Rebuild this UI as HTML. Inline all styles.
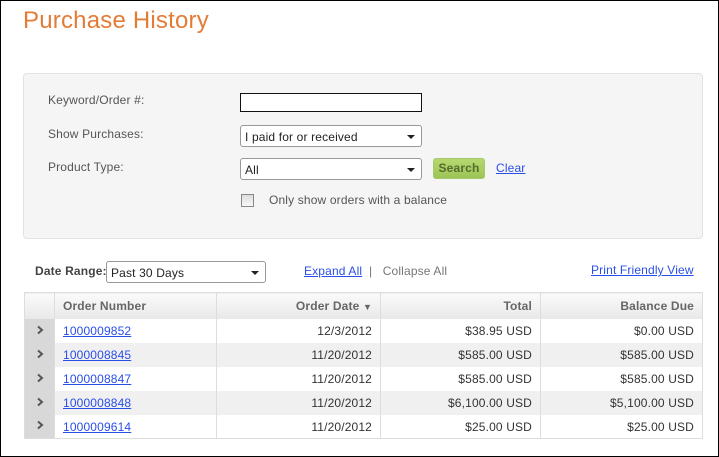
<!DOCTYPE html>
<html><head><style>
*{box-sizing:border-box;margin:0;padding:0}
body{width:719px;height:457px;overflow:hidden;background:#fff;font-family:"Liberation Sans",Arial,sans-serif;font-size:12px;letter-spacing:0.15px;color:#555;position:relative}
.frame{position:absolute;left:0;top:0;width:719px;height:457px;border:1px solid #000;pointer-events:none}
.a{position:absolute;white-space:nowrap}
h1{position:absolute;left:23px;top:7px;font-size:24px;font-weight:normal;color:#e37c36;letter-spacing:0.2px}
.panel{position:absolute;left:23px;top:73px;width:680px;height:166px;background:#f5f5f5;border:1px solid #e2e2e2;border-radius:4px}
.inp{position:absolute;background:#fff;border:1px solid #999;border-radius:3px;height:22px;font-size:12px;color:#222;padding:4px 0 0 4px}
.caret{position:absolute;right:6px;top:9px;width:0;height:0;border-left:4px solid transparent;border-right:4px solid transparent;border-top:4px solid #222}
a,.lnk{color:#2a4ee8;text-decoration:underline}
table{position:absolute;left:24px;top:292px;width:679px;border-collapse:collapse;border:1px solid #ddd}
th{height:26px;background:linear-gradient(#fafafa,#e8e8e8);font-weight:bold;color:#666;font-size:12px;border-left:1px solid #ddd;padding:1px 8px 0}
td{height:24px;border-left:1px solid #ddd;padding:1px 8px 0;color:#333;font-size:12px}
tr:nth-child(odd) td{background:#f0f0f0}
td.ex{background:#d8d8d8!important;text-align:center;padding:0}
.r{text-align:right}
</style></head><body>
<h1>Purchase History</h1>
<div class="panel"></div>
<div class="a" style="left:48px;top:93px">Keyword/Order #:</div>
<div class="inp" style="left:240px;top:93px;width:182px;height:19px;border:1px solid #111;border-radius:0"></div>
<div class="a" style="left:48px;top:127px">Show Purchases:</div>
<div class="inp" style="left:240px;top:125px;width:182px">I paid for or received<span class="caret"></span></div>
<div class="a" style="left:48px;top:160px">Product Type:</div>
<div class="inp" style="left:240px;top:158px;width:182px">All<span class="caret"></span></div>
<div class="a" style="left:433px;top:158px;width:52px;height:21px;background:linear-gradient(#b6d870,#9cc455);border:1px solid #a6c86a;border-radius:3px;color:#556b2f;font-weight:bold;font-size:12px;text-align:center;line-height:19px">Search</div>
<div class="a lnk" style="left:496px;top:161px">Clear</div>
<div class="a" style="left:241px;top:194px;width:13px;height:13px;border:1px solid #888;background:linear-gradient(#ddd,#f8f8f8)"></div>
<div class="a" style="left:269px;top:193px">Only show orders with a balance</div>
<div class="a" style="left:35px;top:264px;font-weight:bold;color:#444">Date Range:</div>
<div class="inp" style="left:106px;top:261px;width:160px">Past 30 Days<span class="caret"></span></div>
<div class="a lnk" style="left:304px;top:264px">Expand All</div>
<div class="a" style="left:369px;top:264px;color:#777">|&nbsp;&nbsp; Collapse All</div>
<div class="a lnk" style="left:591px;top:263px">Print Friendly View</div>
<table>
<tr><th style="width:30px;border-left:none"></th><th style="width:162px;text-align:left">Order Number</th><th class="r" style="width:164px">Order Date <span style="font-size:9px">&#9660;</span></th><th class="r" style="width:160px">Total</th><th class="r">Balance Due</th></tr>
<tr><td class="ex"><svg width="8" height="10" viewBox="0 0 8 10"><path d="M2 1.5L6 5L2 8.5" fill="none" stroke="#555" stroke-width="2"/></svg></td><td><a>1000009852</a></td><td class="r">12/3/2012</td><td class="r">$38.95 USD</td><td class="r">$0.00 USD</td></tr>
<tr><td class="ex"><svg width="8" height="10" viewBox="0 0 8 10"><path d="M2 1.5L6 5L2 8.5" fill="none" stroke="#555" stroke-width="2"/></svg></td><td><a>1000008845</a></td><td class="r">11/20/2012</td><td class="r">$585.00 USD</td><td class="r">$585.00 USD</td></tr>
<tr><td class="ex"><svg width="8" height="10" viewBox="0 0 8 10"><path d="M2 1.5L6 5L2 8.5" fill="none" stroke="#555" stroke-width="2"/></svg></td><td><a>1000008847</a></td><td class="r">11/20/2012</td><td class="r">$585.00 USD</td><td class="r">$585.00 USD</td></tr>
<tr><td class="ex"><svg width="8" height="10" viewBox="0 0 8 10"><path d="M2 1.5L6 5L2 8.5" fill="none" stroke="#555" stroke-width="2"/></svg></td><td><a>1000008848</a></td><td class="r">11/20/2012</td><td class="r">$6,100.00 USD</td><td class="r">$5,100.00 USD</td></tr>
<tr><td class="ex"><svg width="8" height="10" viewBox="0 0 8 10"><path d="M2 1.5L6 5L2 8.5" fill="none" stroke="#555" stroke-width="2"/></svg></td><td><a>1000009614</a></td><td class="r">11/20/2012</td><td class="r">$25.00 USD</td><td class="r">$25.00 USD</td></tr>
</table>
<div class="frame"></div>
</body></html>
